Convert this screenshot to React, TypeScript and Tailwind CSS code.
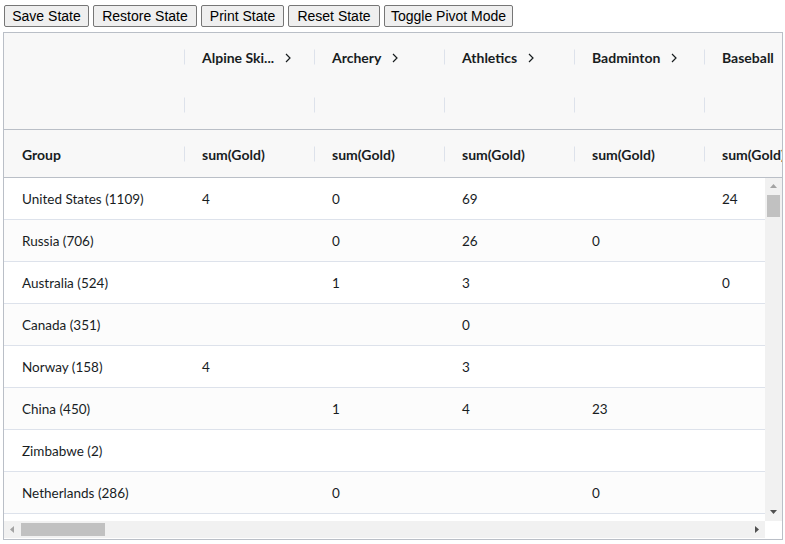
import React from "react";

const cols = ["Alpine Ski...", "Archery", "Athletics", "Badminton", "Baseball"];

const rows: [string, (string | null)[]][] = [
  ["United States (1109)", ["4", "0", "69", null, "24"]],
  ["Russia (706)", [null, "0", "26", "0", null]],
  ["Australia (524)", [null, "1", "3", null, "0"]],
  ["Canada (351)", [null, null, "0", null, null]],
  ["Norway (158)", ["4", null, "3", null, null]],
  ["China (450)", [null, "1", "4", "23", null]],
  ["Zimbabwe (2)", [null, null, null, null, null]],
  ["Netherlands (286)", [null, "0", null, "0", null]],
  ["", [null, null, null, null, null]],
];

function Chevron() {
  return (
    <svg width="8" height="10" viewBox="0 0 8 10" className="ml-[10px] shrink-0">
      <path d="M2 1 L6 5 L2 9" fill="none" stroke="#181d1f" strokeWidth="1.2" />
    </svg>
  );
}

function Sep() {
  return <div className="absolute left-0 top-1/2 h-[15px] w-px -translate-y-1/2 bg-[#dde2eb]" />;
}

export default function App() {
  const buttons: [string, string][] = [
    ["Save State", "w-[85px]"],
    ["Restore State", "w-[104px]"],
    ["Print State", "w-[83px]"],
    ["Reset State", "w-[92px]"],
    ["Toggle Pivot Mode", "w-[129px]"],
  ];
  return (
    <div className="w-[785px] h-[544px] bg-white overflow-hidden" style={{ fontFamily: "Lato, 'Open Sans', sans-serif" }}>
      <div className="flex gap-[4px] pl-[4px] pt-[5px]">
        {buttons.map(([b, w]) => (
          <button
            key={b}
            className={`${w} h-[22px] rounded-[2px] border border-[#767676] bg-[#efefef] text-[14px] leading-[20px] text-black whitespace-nowrap`}
            style={{ fontFamily: "'Liberation Sans', Arial, sans-serif" }}
          >
            {b}
          </button>
        ))}
      </div>
      <div className="ml-[3px] mt-[5px] w-[780px] h-[508px] border border-[#babfc7] flex flex-col text-[13.5px] text-[#181d1f]">
        {/* header groups */}
        <div className="h-[97px] bg-[#f8f8f8] border-b border-[#babfc7] flex flex-col overflow-hidden shrink-0 text-[14px]">
          <div className="h-[48px] flex">
            <div className="w-[180px] shrink-0" />
            {cols.map((c) => (
              <div key={c} className="relative w-[130px] shrink-0 flex items-center pl-[18px] pt-[1px] font-bold">
                <Sep />
                <span className="whitespace-nowrap">{c}</span>
                {c !== "Baseball" && <Chevron />}
              </div>
            ))}
          </div>
          <div className="h-[48px] flex">
            <div className="w-[180px] shrink-0" />
            {cols.map((c) => (
              <div key={c} className="relative w-[130px] shrink-0">
                <Sep />
              </div>
            ))}
          </div>
        </div>
        {/* column headers */}
        <div className="h-[48px] bg-[#f8f8f8] border-b border-[#babfc7] flex overflow-hidden shrink-0 font-bold text-[14px]">
          <div className="w-[180px] shrink-0 flex items-center pl-[18px] pt-[1px]">Group</div>
          {cols.map((c) => (
            <div key={c} className="relative w-[130px] shrink-0 flex items-center pl-[18px] pt-[1px] whitespace-nowrap">
              <Sep />
              sum(Gold)
            </div>
          ))}
        </div>
        {/* body */}
        <div className="h-[343px] flex shrink-0">
          <div className="w-[761px] overflow-hidden">
            {rows.map(([g, vals], i) => (
              <div
                key={i}
                className={`h-[42px] flex border-b border-[#dde2eb] ${i % 2 === 1 ? "bg-[#fcfcfc]" : "bg-white"}`}
              >
                <div className="w-[180px] shrink-0 flex items-center pl-[18px] pt-[2px] whitespace-nowrap">{g}</div>
                {vals.map((v, j) => (
                  <div key={j} className="w-[130px] shrink-0 flex items-center pl-[18px] pt-[2px]">
                    {v ?? ""}
                  </div>
                ))}
              </div>
            ))}
          </div>
          <div className="w-[17px] bg-[#f1f1f1] flex flex-col items-center relative shrink-0">
            <svg width="7" height="4" viewBox="0 0 7 4" className="mt-[6px]">
              <path d="M0 4 L3.5 0 L7 4 Z" fill="#a3a3a3" />
            </svg>
            <div className="mt-[7px] w-[13px] h-[22px] bg-[#c1c1c1]" />
            <div className="flex-1" />
            <svg width="7" height="4" viewBox="0 0 7 4" className="mb-[7px]">
              <path d="M0 0 L7 0 L3.5 4 Z" fill="#505050" />
            </svg>
          </div>
        </div>
        {/* horizontal scrollbar */}
        <div className="flex h-[17px] shrink-0">
          <div className="w-[761px] bg-[#f1f1f1] flex items-center">
            <svg width="4" height="7" viewBox="0 0 4 7" className="ml-[6px]">
              <path d="M4 0 L0 3.5 L4 7 Z" fill="#a3a3a3" />
            </svg>
            <div className="ml-[7px] w-[84px] h-[13px] bg-[#c1c1c1]" />
            <div className="flex-1" />
            <svg width="4" height="7" viewBox="0 0 4 7" className="mr-[6px]">
              <path d="M0 0 L4 3.5 L0 7 Z" fill="#505050" />
            </svg>
          </div>
          <div className="w-[17px] bg-white" />
        </div>
      </div>
    </div>
  );
}
